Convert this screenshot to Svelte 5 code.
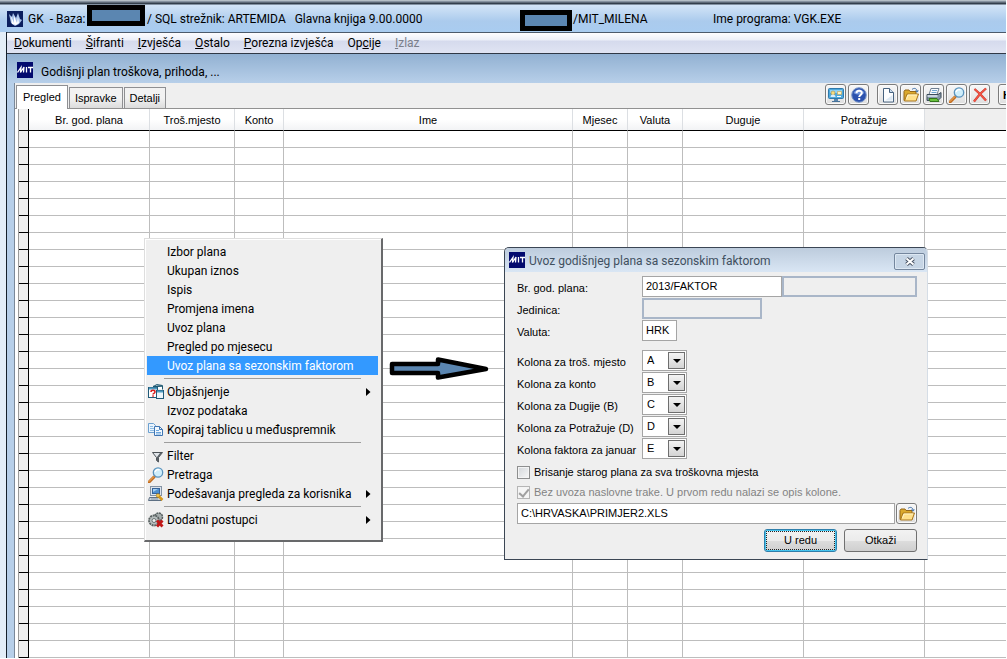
<script lang="ts">
  interface MenuEntry {
    label?: string
    icon?: string
    submenu?: boolean
    active?: boolean
    separator?: boolean
  }

  // Main menu: text before the mnemonic, mnemonic, rest
  const mainMenu = [
    { pre: '', key: 'D', post: 'okumenti' },
    { pre: '', key: 'Š', post: 'ifranti' },
    { pre: '', key: 'I', post: 'zvješća' },
    { pre: '', key: 'O', post: 'stalo' },
    { pre: '', key: 'P', post: 'orezna izvješća' },
    { pre: 'Op', key: 'c', post: 'ije' },
    { pre: '', key: 'I', post: 'zlaz', disabled: true }
  ]

  const tabs = ['Pregled', 'Ispravke', 'Detalji']
  let activeTab = $state('Pregled')

  const tools = [
    ['monitor', 'help'],
    ['new', 'open', 'print', 'search', 'delete']
  ]

  const columns = [
    { title: 'Br. god. plana', size: 'wide' },
    { title: 'Troš.mjesto', size: 'medium' },
    { title: 'Konto', size: 'narrow' },
    { title: 'Ime', size: 'name' },
    { title: 'Mjesec', size: 'small' },
    { title: 'Valuta', size: 'small' },
    { title: 'Duguje', size: 'wide' },
    { title: 'Potražuje', size: 'wide' }
  ]
  const rows = Array.from({ length: 31 }, (_, i) => i)

  const contextMenu: MenuEntry[] = [
    { label: 'Izbor plana' },
    { label: 'Ukupan iznos' },
    { label: 'Ispis' },
    { label: 'Promjena imena' },
    { label: 'Uvoz plana' },
    { label: 'Pregled po mjesecu' },
    { label: 'Uvoz plana sa sezonskim faktorom', active: true },
    { separator: true },
    { label: 'Objašnjenje', icon: 'explain', submenu: true },
    { label: 'Izvoz podataka' },
    { label: 'Kopiraj tablicu u međuspremnik', icon: 'copy' },
    { separator: true },
    { label: 'Filter', icon: 'filter' },
    { label: 'Pretraga', icon: 'search' },
    { label: 'Podešavanja pregleda za korisnika', icon: 'settings', submenu: true },
    { separator: true },
    { label: 'Dodatni postupci', icon: 'gears', submenu: true }
  ]

  // Import dialog
  const letters = ['A', 'B', 'C', 'D', 'E']
  let mapping = $state([
    { id: 'col-tm', label: 'Kolona za troš. mjesto', value: 'A' },
    { id: 'col-konto', label: 'Kolona za konto', value: 'B' },
    { id: 'col-dug', label: 'Kolona za Dugije (B)', value: 'C' },
    { id: 'col-pot', label: 'Kolona za Potražuje (D)', value: 'D' },
    { id: 'col-fak', label: 'Kolona faktora za januar', value: 'E' }
  ])
  let plan = $state('2013/FAKTOR')
  let currency = $state('HRK')
  let path = $state('C:\\HRVASKA\\PRIMJER2.XLS')
  let deleteOld = $state(false)
</script>

{#snippet icon(name: string)}
  <svg class="icon" viewBox="0 0 16 16" aria-hidden="true">
    {#if name === 'monitor'}
      <rect x="0.5" y="1.5" width="15" height="10" rx="1" fill="#4fa9dc" stroke="#2f79ab" />
      <path d="M2 3h12v3H2z" fill="#8fd2f4" />
      <circle cx="5" cy="6" r="2" fill="#f6dc7c" stroke="#a8843c" stroke-width=".5" />
      <path d="M2.5 10a2.5 2.5 0 0 1 5 0z" fill="#d9eefb" />
      <path d="M9.500 4.500h4v3h-4z" fill="#fff3c4" stroke="#c9a24a" stroke-width=".6" />
      <path d="M9 9.500h4" stroke="#fff" />
      <path d="M6 12h4v2H6z" fill="#5a86ad" />
      <path d="M4 14.5h8" stroke="#47729a" />
    {:else if name === 'help'}
      <circle cx="8" cy="8" r="7.3" fill="#2b52ae" stroke="#7c98c8" />
      <path d="M2.5 6a6 6 0 0 1 11 0c-3 2-8 2-11 0z" fill="#6f94dc" />
      <path d="M5.5 6.2C5.5 3 10.8 3 10.8 6c0 1.900-2.600 2-2.600 4" fill="none" stroke="#fff" stroke-width="2" />
      <rect x="7.200" y="11" width="2" height="2" fill="#fff" />
    {:else if name === 'new'}
      <path d="M3.500 1.500h6l4 4v9.500h-10z" fill="#fdfeff" stroke="#47627f" />
      <path d="M9.500 1.500v4h4" fill="#c9dced" stroke="#47627f" />
      <path d="M5 13.500h7.500V8z" fill="#dce8f3" />
    {:else if name === 'open'}
      <path d="M1 4.500l1-1.500h4l1 1.500h6v9H1z" fill="#dba92c" stroke="#94671a" />
      <path d="M1.500 14l2.500-7h11.500l-2.500 7z" fill="#ffe08a" stroke="#a8771e" />
      <path d="M3.500 12l1.500-4h9" fill="none" stroke="#fff3c4" />
      <path d="M9 2.500c2-2 4.500-1 5 1" fill="none" stroke="#3d6ea8" />
      <path d="M12 3.500h4l-2 2z" fill="#3d6ea8" />
    {:else if name === 'print'}
      <path d="M5 1.500h8l-2 6H3z" fill="#f7fbff" stroke="#6f7f91" />
      <path d="M6 3.500h5M5.500 5.500h5" stroke="#6fa5cf" />
      <path d="M1 7.500h11l3-2v5l-3 3H1z" fill="#8597a8" stroke="#3d4c5a" />
      <path d="M1.500 8h10v2h-10z" fill="#c9d5df" />
      <path d="M3 11.500h8l2 3H4z" fill="#68c23c" stroke="#33751c" />
    {:else if name === 'search'}
      <path d="M1 15l5-5" stroke="#c26c1e" stroke-width="3" stroke-linecap="round" />
      <path d="M1 14.500l5-5" stroke="#f6b465" stroke-linecap="round" />
      <circle cx="10" cy="5.500" r="4.700" fill="#cfeefb" stroke="#5b93bd" stroke-width="1.300" />
      <path d="M7 5c.5-2 2.500-3 4.500-2" fill="none" stroke="#fff" stroke-width="1.500" />
    {:else if name === 'delete'}
      <path d="M2.500 2l5.500 5L14 1.500M2 14.500L8 7l6 6.500" fill="none" stroke="#b5362c" stroke-width="2.200" />
      <path d="M2.500 2l5.500 5L14 1.500M2 14.500L8 7l6 6.500" fill="none" stroke="#f55343" stroke-width="1.600" />
    {:else if name === 'explain'}
      <path d="M4.500 3.500l4-3 6 1v4" fill="#fff" stroke="#1e5870" />
      <path d="M5 2.500l9-.5" stroke="#1e5870" stroke-width="1.500" />
      <rect x="0.500" y="3.500" width="9" height="10" fill="#fff" stroke="#205a78" />
      <path d="M1 4.500h8" stroke="#4d9ac0" stroke-width="2" />
      <path d="M3 8c0-2.200 4-2.200 4 0 0 1.400-2 1.200-2 2.500" fill="none" stroke="#d81e1e" stroke-width="1.500" />
      <rect x="4.300" y="11.300" width="1.500" height="1.500" fill="#d81e1e" />
      <rect x="8.500" y="6.500" width="7" height="8" fill="#edf6fb" stroke="#205a78" />
      <path d="M9 7.500h6" stroke="#4d9ac0" stroke-width="2" />
    {:else if name === 'copy'}
      <path d="M0.500 1.500h5l2 2v7h-7z" fill="#eaf4fd" stroke="#6ba0d0" />
      <path d="M2 4.500h3M2 6.500h4M2 8.500h4" stroke="#8fbde4" />
      <path d="M6.500 4.500h5l3 3v6h-8z" fill="#f1f8fe" stroke="#3f75b2" />
      <path d="M11.500 4.500v3h3" fill="none" stroke="#3f75b2" />
      <path d="M8 8.500h3M8 10.500h5M8 12h5" stroke="#6ea6dc" />
    {:else if name === 'filter'}
      <path d="M4.500 4.500h10l-4 5v4.500l-2-1.500v-3z" fill="#e2e6ea" stroke="#4c5357" />
      <path d="M10.500 9.500v4.500l-1.500-1V9l3-4h2z" fill="#596066" />
    {:else if name === 'settings'}
      <rect x="2.500" y="0.500" width="11" height="9" fill="#dce4ed" stroke="#8493a4" />
      <rect x="4.500" y="2.500" width="7" height="5" fill="#4f8fd0" stroke="#35639a" />
      <path d="M5 3h5L5 6z" fill="#a5cff2" />
      <path d="M1.500 11.500h11l1 3h-13z" fill="#c8d1db" stroke="#5d6f83" />
      <path d="M3 13h7" stroke="#8797a8" />
      <path d="M10 9.500l4.500 4.500" stroke="#d99a1a" stroke-width="2.500" />
      <circle cx="10" cy="9.500" r="1.800" fill="#f6ca4d" stroke="#aa7516" stroke-width=".6" />
    {:else if name === 'gears'}
      <circle cx="10.500" cy="5" r="4" fill="#a6adad" stroke="#555e5e" stroke-dasharray="2 .7" stroke-width="1.500" />
      <circle cx="6" cy="8.500" r="5" fill="#b7bebe" stroke="#596161" stroke-dasharray="2 .7" stroke-width="1.800" />
      <circle cx="6" cy="8.500" r="2" fill="#eef0f0" stroke="#6b7373" />
      <path d="M9 8.500l5.500 6M14.500 8.500L9 14.500" stroke="#c01818" stroke-width="2.800" />
    {:else if name === 'gem'}
      <rect width="16" height="16" fill="#0b1f5e" />
      <path d="M2 3l3 3 1-4 3 5 2-5 2 6 2 1-3 4-4 2-4-3z" fill="#a9c3ea" />
      <path d="M4 5l3 7V5l3 7 1-6 1 6-3 2-4-1z" fill="#fff" />
    {/if}
  </svg>
{/snippet}

{#snippet logo()}
  <svg class="icon" viewBox="0 0 16 16" aria-hidden="true">
    <rect width="16" height="16" fill="#030a6e" />
    <path d="M0.500 10.500L4 5.500l-.5 5L7 5l-.5 5.500M9.500 5v5.500M11 5.500h5M13.500 5.500v5" fill="none" stroke="#fff" stroke-width="1.300" />
  </svg>
{/snippet}

<div class="app">
  <header class="titlebar">
    {@render icon('gem')}
    <span>GK&nbsp; - Baza:</span>
    <span class="redacted long"></span>
    <span>/ SQL strežnik: ARTEMIDA&nbsp;&nbsp; Glavna knjiga 9.00.0000</span>
    <span class="redacted short"></span>
    <span>/MIT_MILENA</span>
    <span>Ime programa: VGK.EXE</span>
  </header>

  <div class="frame">
    <div class="client">
      <nav class="menubar">
        {#each mainMenu as item}
          <button disabled={item.disabled}>{item.pre}<u>{item.key}</u>{item.post}</button>
        {/each}
      </nav>

      <section class="child">
        <div class="child-title">
          {@render logo()}
          <span>Godišnji plan troškova, prihoda, ...</span>
        </div>

        <div class="pane">
          <div class="toolbar">
            <div class="tabs" role="tablist">
              {#each tabs as tab}
                <button
                  role="tab"
                  aria-selected={activeTab === tab}
                  class:selected={activeTab === tab}
                  onclick={() => activeTab = tab}
                >{tab}</button>
              {/each}
            </div>
            <div class="tools">
              {#each tools as group}
                <div class="group">
                  {#each group as tool}
                    <button class="tool" aria-label={tool}>{@render icon(tool)}</button>
                  {/each}
                </div>
              {/each}
              <div class="cut"><button class="tool">H</button></div>
            </div>
          </div>

          <table>
            <thead>
              <tr>
                <th class="handle"></th>
                {#each columns as column}
                  <th class={column.size}>{column.title}</th>
                {/each}
                <th class="rest"></th>
              </tr>
            </thead>
            <tbody>
              {#each rows as row (row)}
                <tr>
                  <td class="handle"></td>
                  {#each columns as column}
                    <td></td>
                  {/each}
                  <td class="rest"></td>
                </tr>
              {/each}
            </tbody>
          </table>
        </div>
      </section>
    </div>
  </div>

  <!-- Popup menu -->
  <div class="context-menu" role="menu">
    {#each contextMenu as entry}
      {#if entry.separator}
        <hr />
      {:else}
        <button role="menuitem" class:active={entry.active}>
          <span class="slot">{#if entry.icon}{@render icon(entry.icon)}{/if}</span>
          <span class="text">{entry.label}</span>
          {#if entry.submenu}
            <svg class="sub" viewBox="0 0 5 8" aria-hidden="true"><path d="M0 0l4.500 4L0 8z" /></svg>
          {/if}
        </button>
      {/if}
    {/each}
  </div>

  <svg class="pointer" viewBox="0 0 100 26" aria-hidden="true">
    <path d="M3 8h46V3.500L97 13 49 21.500V17H3z" fill="#5b86b1" stroke="#000" stroke-width="4.500" stroke-linejoin="round" />
  </svg>

  <!-- Import dialog -->
  <form class="dialog" onsubmit={(e) => e.preventDefault()}>
    <div class="dialog-title">
      {@render logo()}
      <span>Uvoz godišnjeg plana sa sezonskim faktorom</span>
      <button type="button" class="close" aria-label="Zatvori">
        <svg viewBox="0 0 12 9" aria-hidden="true">
          <path d="M2.500 1.500l7 6M9.500 1.500l-7 6" stroke="#4a5566" stroke-width="4" />
          <path d="M2.500 1.500l7 6M9.500 1.500l-7 6" stroke="#fff" stroke-width="2" />
        </svg>
      </button>
    </div>

    <div class="dialog-body">
      <div class="row">
        <label for="plan">Br. god. plana:</label>
        <input id="plan" class="plan" type="text" bind:value={plan} />
        <input class="plan-name" type="text" aria-label="Naziv plana" disabled />
      </div>
      <div class="row">
        <label for="unit">Jedinica:</label>
        <input id="unit" class="unit" type="text" disabled />
      </div>
      <div class="row">
        <label for="currency">Valuta:</label>
        <input id="currency" class="currency" type="text" bind:value={currency} />
      </div>

      <div class="mapping">
        {#each mapping as item (item.id)}
          <div class="row">
            <label for={item.id}>{item.label}</label>
            <div class="combo">
              <select id={item.id} bind:value={item.value}>
                {#each letters as letter}
                  <option>{letter}</option>
                {/each}
              </select>
              <span class="drop">
                <svg viewBox="0 0 8 4" aria-hidden="true"><path d="M0 0h8L4 4z" /></svg>
              </span>
            </div>
          </div>
        {/each}
      </div>

      <label class="check">
        <input type="checkbox" bind:checked={deleteOld} />
        Brisanje starog plana za sva troškovna mjesta
      </label>
      <label class="check off">
        <input type="checkbox" checked disabled />
        Bez uvoza naslovne trake. U prvom redu nalazi se opis kolone.
      </label>

      <div class="file">
        <input type="text" aria-label="Datoteka" bind:value={path} />
        <button type="button" class="tool" aria-label="Otvori">{@render icon('open')}</button>
      </div>

      <div class="actions">
        <button class="default"><span>U redu</span></button>
        <button type="button"><span>Otkaži</span></button>
      </div>
    </div>
  </form>
</div>

<style>
  :global(body) {
    background: #fff;
  }

  .app {
    --ui: Roboto, 'Noto Sans', sans-serif;
    --form: 'Liberation Sans', Arial, sans-serif;
    position: relative;
    overflow: hidden;
    padding-right: 1px;
    font: 12px/16px var(--ui);
    color: #000;
  }

  .app *,
  .app {
    box-sizing: border-box;
  }

  button,
  input,
  select {
    margin: 0;
    padding: 0;
    font: inherit;
    color: inherit;
  }

  .icon {
    display: block;
    flex: none;
    width: 16px;
    height: 16px;
  }

  /* Main window title */
  .titlebar {
    display: grid;
    grid-template-columns: 21px 59px 60px 373px 53px 140px 1fr;
    align-items: center;
    height: 32px;
    padding: 4px 0 0 7px;
    border-top: 1px solid #b5bfc6;
    background: linear-gradient(to bottom, #8793a0 1px, #333f4c 2px, #333f4c 3px, #d3e5f7 4px, #abcbed 20px, #a9ccf0);
    white-space: nowrap;
  }

  .redacted {
    height: 21px;
    border: 5px solid #000;
    background: #5b86b1;
  }

  .redacted.long {
    width: 58px;
    margin-bottom: 6px;
  }

  .redacted.short {
    width: 52px;
    margin-top: 3px;
  }

  .frame {
    padding-left: 6px;
    background: linear-gradient(to right, #e4eef8, #9fc8ee);
  }

  .client {
    border-left: 1px solid #16202b;
  }

  .menubar {
    display: flex;
    gap: 14px;
    height: 22px;
    padding-left: 7px;
    border-top: 1px solid #4c5a6b;
    border-bottom: 1px solid #303946;
    background: linear-gradient(to bottom, #fdfdff, #eceff8 7px, #d5daed 8px, #e0e4f3);
  }

  .menubar button {
    border: 0;
    background: none;
    white-space: nowrap;
  }

  .menubar button:disabled {
    color: #7b7f8a;
  }

  /* Child window */
  .child {
    padding-left: 7px;
    background: linear-gradient(to bottom, #92b1d2, #b7cfe9 29px);
  }

  .child-title {
    display: flex;
    align-items: center;
    gap: 8px;
    height: 29px;
    padding: 6px 0 0 3px;
  }

  .child-title .icon,
  .dialog-title .icon {
    margin-bottom: 3px;
  }

  .pane {
    padding-left: 3px;
    border-left: 1px solid #7a8899;
    background: #fff;
    font: 11px/14px var(--form);
  }

  .toolbar {
    display: flex;
    justify-content: space-between;
    height: 26px;
    margin-left: -3px;
    border-bottom: 1px solid #919191;
    background: #efefef;
  }

  .tabs {
    display: flex;
    align-items: flex-end;
    gap: 1px;
    padding-left: 1px;
  }

  .tabs button {
    height: 21px;
    padding: 0 5px;
    border: 1px solid #8e8f92;
    border-bottom: 0;
    background: linear-gradient(to bottom, #f2f2f2 50%, #dcdcdc);
  }

  .tabs button.selected {
    height: 24px;
    margin-bottom: -1px;
    padding: 0 6px 2px;
    background: #fff;
  }

  .tools,
  .group {
    display: flex;
    gap: 2px;
  }

  .tools {
    gap: 8px;
    padding-top: 1px;
  }

  .tool {
    display: grid;
    place-items: center;
    flex: none;
    width: 21px;
    height: 21px;
    border: 1px solid #7c7c7c;
    border-radius: 3px;
    background: linear-gradient(to bottom, #f7f7f7, #ececec 50%, #dedede);
    box-shadow: inset 0 0 0 1px #fafafa;
  }

  .cut {
    width: 8px;
    overflow: hidden;
  }

  .cut .tool {
    place-items: center start;
    padding-left: 4px;
    font-weight: bold;
  }

  /* Grid */
  table {
    table-layout: fixed;
    width: 100%;
    border-left: 1px solid #9a9a9a;
    border-spacing: 0;
    background: #fff;
  }

  th,
  td {
    height: 17px;
    padding: 0;
    border-right: 1px solid #bdbdbd;
    border-bottom: 1px solid #bdbdbd;
  }

  th {
    height: 22px;
    border-right-color: #dcdfe3;
    border-bottom-color: #000;
    background: linear-gradient(to bottom, #fff 50%, #f2f3f5);
    font-weight: normal;
  }

  .handle {
    width: 10px;
    border-right-color: #000;
    border-bottom-color: #000;
    background: #efefef;
  }

  .wide {
    width: 121px;
  }

  .medium {
    width: 85px;
  }

  .narrow {
    width: 49px;
  }

  .name {
    width: 289px;
  }

  .small {
    width: 55px;
  }

  .rest {
    border-right: 0;
  }

  th.rest {
    background: #efefef;
  }

  /* Context menu */
  .context-menu {
    position: absolute;
    top: 238px;
    left: 144px;
    width: 239px;
    padding: 3px 3px 11px 2px;
    border: 1px solid #dedede;
    border-right: 2px solid #68696b;
    border-bottom: 2px solid #68696b;
    background: #efefef;
    box-shadow: inset 1px 1px #fff;
  }

  .context-menu button {
    display: flex;
    align-items: center;
    gap: 3px;
    width: 100%;
    height: 19px;
    padding: 0 7px 0 1px;
    border: 0;
    background: none;
    text-align: left;
    white-space: nowrap;
  }

  .context-menu button.active {
    background: #3399ff;
    color: #fff;
  }

  .context-menu .slot {
    flex: none;
    width: 16px;
  }

  .context-menu .text {
    flex: 1;
  }

  .context-menu .sub {
    width: 5px;
    height: 8px;
  }

  .context-menu hr {
    height: 1px;
    margin: 3px 17px;
    border: 0;
    background: #9d9d9d;
  }

  .pointer {
    position: absolute;
    top: 356px;
    left: 389px;
    width: 100px;
    height: 26px;
  }

  /* Dialog */
  .dialog {
    position: absolute;
    top: 247px;
    left: 504px;
    width: 424px;
    border: 1px solid #3b4654;
    border-right-color: #d5dde6;
    border-radius: 5px 5px 0 0;
    background: #efefef;
    font: 11px/14px var(--form);
    overflow: hidden;
  }

  .dialog-title {
    display: flex;
    align-items: center;
    gap: 4px;
    height: 24px;
    padding: 2px 2px 0 4px;
    background: linear-gradient(to bottom, #bdccdd, #d9e6f4);
    color: #41505f;
    font: 12px/16px var(--ui);
    white-space: nowrap;
  }

  .close {
    display: grid;
    place-items: center;
    width: 31px;
    height: 17px;
    margin-left: auto;
    border: 1px solid #74869d;
    border-radius: 2px;
    background: #c6d5e5;
    box-shadow: inset 0 0 0 1px #dde8f3;
  }

  .close svg {
    width: 12px;
    height: 9px;
  }

  .dialog-body {
    padding: 4px 10px 7px 12px;
  }

  .row {
    display: flex;
    height: 22px;
  }

  .row label {
    width: 125px;
    padding-top: 5px;
    white-space: nowrap;
  }

  .row input,
  .file input {
    height: 21px;
    padding: 0 3px 2px;
    border: 1px solid #a5a5a5;
    border-radius: 0;
    background: #fff;
  }

  .row input:disabled {
    border: 2px solid #a9b6c8;
    background: #efefef;
  }

  .row .plan {
    width: 140px;
  }

  .row .plan-name {
    flex: 1;
    min-width: 0;
  }

  .row .unit {
    width: 120px;
  }

  .row .currency {
    width: 35px;
  }

  .mapping {
    padding: 8px 0 2px;
  }

  .combo {
    display: grid;
    width: 45px;
    height: 21px;
  }

  .combo select,
  .combo .drop {
    grid-area: 1 / 1;
  }

  .combo select {
    appearance: none;
    padding: 0 4px 1px;
    border: 1px solid #a5a5a5;
    border-radius: 0;
    background: #fff;
  }

  .combo .drop {
    display: grid;
    place-items: center;
    justify-self: end;
    align-self: center;
    width: 17px;
    height: 17px;
    margin-right: 2px;
    border: 1px solid #6e6e6e;
    background: linear-gradient(to bottom, #f3f3f3, #d4d4d4);
    pointer-events: none;
  }

  .combo svg {
    width: 8px;
    height: 4px;
  }

  .check {
    display: flex;
    align-items: center;
    gap: 4px;
    height: 20px;
    white-space: nowrap;
  }

  .check input {
    appearance: none;
    display: grid;
    place-items: center;
    width: 13px;
    height: 13px;
    border: 1px solid #8e8f8f;
    background: linear-gradient(135deg, #d3d6da, #f7f7f7);
    box-shadow: inset 0 0 0 1px #f4f4f4;
  }

  .check input:checked::after {
    content: '';
    width: 4px;
    height: 8px;
    margin-bottom: 2px;
    border: solid currentColor;
    border-width: 0 2px 2px 0;
    transform: rotate(40deg);
  }

  .check.off {
    color: #838383;
  }

  .check.off input {
    border-color: #b5b5b5;
    background: #f5f5f5;
    color: #a0a0a0;
  }

  .file {
    display: flex;
    gap: 1px;
    padding-top: 1px;
  }

  .file input {
    flex: 1;
    min-width: 0;
  }

  .actions {
    display: flex;
    justify-content: flex-end;
    gap: 7px;
    padding-top: 5px;
  }

  .actions button {
    width: 73px;
    height: 23px;
    padding: 1px;
    border: 1px solid #707070;
    border-radius: 3px;
    background: linear-gradient(to bottom, #f2f2f2, #ebebeb 50%, #dddddd 51%, #cfcfcf);
  }

  .actions span {
    display: block;
    line-height: 17px;
    border: 1px solid transparent;
  }

  .actions .default {
    border-color: #2f7fab;
    box-shadow: inset 0 0 0 1px #46c5ef;
  }

  .actions .default span {
    border: 1px dotted #222;
  }
</style>
